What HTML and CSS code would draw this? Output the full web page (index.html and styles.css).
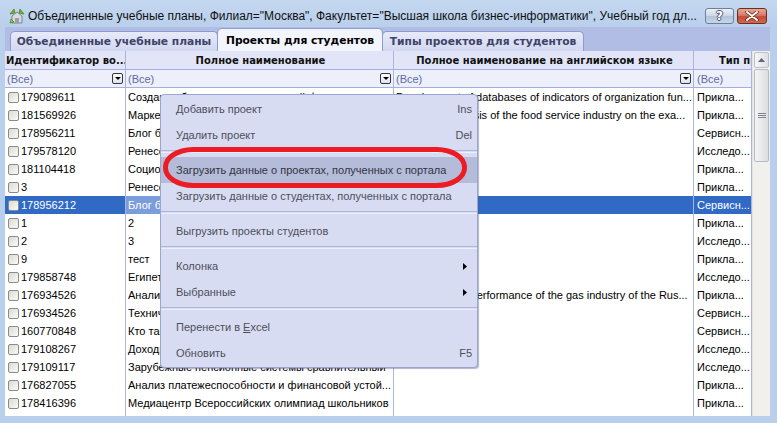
FILE: index.html
```html
<!DOCTYPE html>
<html lang="ru">
<head>
<meta charset="utf-8">
<title>Проекты для студентов</title>
<link rel="stylesheet" href="styles.css">
</head>
<body>
<div class="win">
  <div class="titlebar">
    <svg class="appicon" viewBox="0 0 16 16" width="16" height="16">
      <path d="M3 8 L8 4 L13 8 L13 15 L3 15 Z" fill="#d9dbe0" stroke="#7d838f" stroke-width="1"/>
      <rect x="6" y="10" width="4" height="5" fill="#9aa0ab"/>
      <path d="M1 6 L5 1 L6 5 Z" fill="#6dbb2a" stroke="#3f7f14" stroke-width="0.7"/>
      <path d="M15 6 L11 1 L10 5 Z" fill="#6dbb2a" stroke="#3f7f14" stroke-width="0.7"/>
      <path d="M2 11 L5 14 L1 15 Z" fill="#8fd04a" stroke="#3f7f14" stroke-width="0.7"/>
    </svg>
    <span class="title">Объединенные учебные планы, Филиал="Москва", Факультет="Высшая школа бизнес-информатики", Учебный год дл...</span>
    <div class="tbtns">
      <span class="tbtn help">?</span>
      <span class="tbtn close">
        <svg viewBox="0 0 14 10" width="14" height="10"><path d="M2 1 L12 9 M12 1 L2 9" stroke="#5a2018" stroke-width="3.4" stroke-linecap="round"/><path d="M2 1 L12 9 M12 1 L2 9" stroke="#ffffff" stroke-width="2" stroke-linecap="round"/></svg>
      </span>
    </div>
  </div>

  <div class="client">
    <div class="tabs">
      <div class="tab t1">Объединенные учебные планы</div>
      <div class="tab t2 active">Проекты для студентов</div>
      <div class="tab t3">Типы проектов для студентов</div>
    </div>

    <div class="gridwrap">
      <div class="grid">
        <div class="row head">
          <div class="c c1">Идентификатор во...</div>
          <div class="c c2 center">Полное наименование</div>
          <div class="c c3 center">Полное наименование на английском языке</div>
          <div class="c c4 tip">Тип проекта</div>
        </div>
        <div class="row filter">
          <div class="c c1"><span class="ftxt">(Все)</span><span class="dd"></span></div>
          <div class="c c2"><span class="ftxt">(Все)</span><span class="dd"></span></div>
          <div class="c c3"><span class="ftxt">(Все)</span><span class="dd"></span></div>
          <div class="c c4"><span class="ftxt">(Все)</span></div>
        </div>

        <div class="row"><div class="c c1"><span class="cb"></span>179089611</div><div class="c c2">Создание баз данных показателей функционирования организации</div><div class="c c3">Development of databases of indicators of organization fun...</div><div class="c c4">Прикла...</div></div>
        <div class="row"><div class="c c1"><span class="cb"></span>181569926</div><div class="c c2">Маркетинговое исследование предприятий общественного питания</div><div class="c c3">Marketing analysis of the food service industry on the exa...</div><div class="c c4">Прикла...</div></div>
        <div class="row"><div class="c c1"><span class="cb"></span>178956211</div><div class="c c2">Блог бизнес-информатики</div><div class="c c3"></div><div class="c c4">Сервисн...</div></div>
        <div class="row"><div class="c c1"><span class="cb"></span>179578120</div><div class="c c2">Ренессанс в искусстве</div><div class="c c3"></div><div class="c c4">Исследо...</div></div>
        <div class="row"><div class="c c1"><span class="cb"></span>181104418</div><div class="c c2">Социология управления</div><div class="c c3"></div><div class="c c4">Прикла...</div></div>
        <div class="row"><div class="c c1"><span class="cb"></span>3</div><div class="c c2">Ренессанс</div><div class="c c3"></div><div class="c c4">Прикла...</div></div>
        <div class="row sel"><div class="c c1"><span class="cb"></span>178956212</div><div class="c c2 focus">Блог бизнес-информатики</div><div class="c c3"></div><div class="c c4">Сервисн...</div></div>
        <div class="row"><div class="c c1"><span class="cb"></span>1</div><div class="c c2">2</div><div class="c c3"></div><div class="c c4">Прикла...</div></div>
        <div class="row"><div class="c c1"><span class="cb"></span>2</div><div class="c c2">3</div><div class="c c3"></div><div class="c c4">Исследо...</div></div>
        <div class="row"><div class="c c1"><span class="cb"></span>9</div><div class="c c2">тест</div><div class="c c3"></div><div class="c c4">Прикла...</div></div>
        <div class="row"><div class="c c1"><span class="cb"></span>179858748</div><div class="c c2">Египет</div><div class="c c3"></div><div class="c c4">Исследо...</div></div>
        <div class="row"><div class="c c1"><span class="cb"></span>176934526</div><div class="c c2">Анализ эффективности газовой отрасли</div><div class="c c3">Analysis of the performance of the gas industry of the Rus...</div><div class="c c4">Прикла...</div></div>
        <div class="row"><div class="c c1"><span class="cb"></span>176934526</div><div class="c c2">Технический анализ</div><div class="c c3"></div><div class="c c4">Сервисн...</div></div>
        <div class="row"><div class="c c1"><span class="cb"></span>160770848</div><div class="c c2">Кто такие хакеры</div><div class="c c3"></div><div class="c c4">Сервисн...</div></div>
        <div class="row"><div class="c c1"><span class="cb"></span>179108267</div><div class="c c2">Доходность инвестиций</div><div class="c c3"></div><div class="c c4">Исследо...</div></div>
        <div class="row"><div class="c c1"><span class="cb"></span>179109117</div><div class="c c2">Зарубежные пенсионные системы сравнительный</div><div class="c c3"></div><div class="c c4">Исследо...</div></div>
        <div class="row"><div class="c c1"><span class="cb"></span>176827055</div><div class="c c2">Анализ платежеспособности и финансовой устой...</div><div class="c c3"></div><div class="c c4">Прикла...</div></div>
        <div class="row"><div class="c c1"><span class="cb"></span>178416396</div><div class="c c2">Медиацентр Всероссийских олимпиад школьников</div><div class="c c3"></div><div class="c c4">Прикла...</div></div>
        <div class="row"><div class="c c1"><span class="cb"></span>178416397</div><div class="c c2">Олимпиада</div><div class="c c3"></div><div class="c c4">Прикла...</div></div>
      </div>

      <div class="vscroll">
        <div class="sb-btn">
          <svg viewBox="0 0 7 4" width="7" height="4"><path d="M0 4 L3.5 0 L7 4 Z" fill="#5c6678"/></svg>
        </div>
        <div class="sb-thumb">
          <span class="grip"></span><span class="grip"></span><span class="grip"></span>
        </div>
      </div>
    </div>
  </div>

  <div class="menu">
    <div class="mi"><span>Добавить проект</span><span class="sc">Ins</span></div>
    <div class="mi"><span>Удалить проект</span><span class="sc">Del</span></div>
    <div class="msep"></div>
    <div class="mi hot"><span>Загрузить данные о проектах, полученных с портала</span></div>
    <div class="mi"><span>Загрузить данные о студентах, полученных с портала</span></div>
    <div class="msep"></div>
    <div class="mi"><span>Выгрузить проекты студентов</span></div>
    <div class="msep"></div>
    <div class="mi sub"><span>Колонка</span><svg class="arr" viewBox="0 0 4 7" width="4" height="7"><path d="M0 0 L4 3.5 L0 7 Z" fill="#000"/></svg></div>
    <div class="mi sub"><span>Выбранные</span><svg class="arr" viewBox="0 0 4 7" width="4" height="7"><path d="M0 0 L4 3.5 L0 7 Z" fill="#000"/></svg></div>
    <div class="msep"></div>
    <div class="mi"><span>Перенести в <u>E</u>xcel</span></div>
    <div class="mi"><span>Обновить</span><span class="sc">F5</span></div>
    <div class="redmark"></div>
  </div>
</div>
</body>
</html>
```

FILE: styles.css
```css
html, body {
  margin: 0;
  padding: 0;
}
body {
  width: 777px;
  height: 423px;
  overflow: hidden;
  background: #b9cfeb;
  font-family: "Liberation Sans", Arial, sans-serif;
  font-size: 11px;
  color: #000;
}
.win {
  position: relative;
  width: 777px;
  height: 423px;
  display: flex;
  flex-direction: column;
  background: #b9cfeb;
}

/* title bar */
.titlebar {
  height: 27px;
  box-sizing: border-box;
  padding: 8px 0 0 9px;
  display: flex;
  align-items: flex-start;
  background: linear-gradient(#c4d7f0, #b9cfeb);
}
.appicon {
  flex: none;
  margin-right: 3px;
}
.title {
  flex: 1;
  font-size: 12px;
  line-height: 16px;
  color: #101010;
  white-space: nowrap;
  overflow: hidden;
}
.tbtns {
  display: flex;
  gap: 3px;
  margin-right: 10px;
  margin-left: 4px;
}
.tbtn {
  height: 16px;
  box-sizing: border-box;
  border-radius: 3px;
  display: flex;
  align-items: center;
  justify-content: center;
}
.help {
  width: 29px;
  border: 1px solid #6f7f99;
  background: linear-gradient(#eaf0f7 0%, #cdd8e7 48%, #b3c3da 52%, #c9d6e8 100%);
  font-family: "DejaVu Sans", sans-serif;
  font-weight: bold;
  font-size: 12px;
  color: #fff;
  text-shadow: 1px 0 0 #4b5870, -1px 0 0 #4b5870, 0 1px 0 #4b5870, 0 -1px 0 #4b5870;
}
.close {
  width: 30px;
  border: 1px solid #6e2d23;
  background: linear-gradient(#e9a797 0%, #d77a66 45%, #c44a33 55%, #d06a50 100%);
}

/* client */
.client {
  flex: 1;
  margin: 0 7px 7px 5px;
  display: flex;
  flex-direction: column;
  background: #b2bde6;
  min-height: 0;
}
.tabs {
  height: 24px;
  flex: none;
  display: flex;
  align-items: flex-end;
  padding-left: 5px;
}
.tab {
  height: 20px;
  box-sizing: border-box;
  border: 1px solid #8e9bd0;
  border-bottom: none;
  border-radius: 5px 5px 0 0;
  background: linear-gradient(#e7eaf8, #d2d8f1);
  font-family: "DejaVu Sans", sans-serif;
  font-weight: bold;
  font-size: 10.7px;
  color: #3d4468;
  display: flex;
  align-items: center;
  justify-content: center;
  white-space: nowrap;
}
.tab.active {
  height: 23px;
  background: #f3f5fc;
  color: #000;
}
.t1 { width: 208px; }
.t2 { width: 166px; margin-left: -1px; }
.t3 { width: 202px; margin-left: -1px; }

/* grid */
.gridwrap {
  flex: 1;
  min-height: 0;
  display: flex;
  background: #fff;
  overflow: hidden;
}
.grid {
  width: 747px;
  flex: none;
}
.row {
  display: grid;
  grid-template-columns: 121px 268px 300px 58px;
  height: 18px;
}
.c {
  box-sizing: border-box;
  border-right: 1px solid #a9b5e0;
  white-space: nowrap;
  overflow: hidden;
  display: flex;
  align-items: center;
  padding-left: 2px;
}
.c4 { padding-left: 3px; }
.head {
  height: 19px;
}
.head .c {
  background: #e2e5f7;
  border-bottom: 1px solid #a3afdc;
  font-family: "DejaVu Sans", sans-serif;
  font-weight: bold;
  font-size: 10px;
  color: #111;
}
.head .c1 { padding-left: 1px; }
.head .center { justify-content: center; }
.head .tip { padding-left: 25px; }
.filter .c {
  background: #edeffa;
  border-bottom: 1px solid #a3afdc;
  justify-content: space-between;
  padding-right: 2px;
}
.ftxt {
  color: #5d6ba3;
}
.dd {
  width: 11px;
  height: 11px;
  box-sizing: border-box;
  border: 1px solid #303540;
  border-radius: 2px;
  background: linear-gradient(#ffffff, #dfe3ee);
  position: relative;
}
.dd::after {
  content: "";
  position: absolute;
  left: 2px;
  top: 3px;
  border-left: 3px solid transparent;
  border-right: 3px solid transparent;
  border-top: 3px solid #000;
}
.cb {
  width: 11px;
  height: 11px;
  box-sizing: border-box;
  border: 1px solid #858b8f;
  border-radius: 2px;
  background: linear-gradient(135deg, #dcdcd3, #fafaf7);
  margin: 0 2px 0 1px;
  flex: none;
}
.sel .c {
  background: #316ac5;
  color: #fff;
}
.sel .c.focus {
  background: #7b9ddc;
}

/* scrollbar */
.vscroll {
  width: 18px;
  flex: none;
  box-sizing: border-box;
  background: #f1f0ec;
  border-left: 1px solid #e4e4e4;
  padding: 1px 1px 0 1px;
  display: flex;
  flex-direction: column;
  gap: 1px;
}
.sb-btn {
  height: 16px;
  box-sizing: border-box;
  border: 1px solid #b8c0cf;
  border-radius: 2px;
  background: linear-gradient(90deg, #f7f7f7, #dedfe2);
  display: flex;
  align-items: center;
  justify-content: center;
}
.sb-thumb {
  height: 93px;
  box-sizing: border-box;
  border: 1px solid #b3b9c6;
  border-radius: 2px;
  background: linear-gradient(90deg, #f5f5f5, #dcdde0);
  display: flex;
  flex-direction: column;
  align-items: center;
  justify-content: center;
  gap: 1px;
}
.grip {
  width: 8px;
  height: 1px;
  background: #7d8595;
}

/* context menu */
.menu {
  position: absolute;
  left: 160px;
  top: 94px;
  width: 318px;
  height: 274px;
  box-sizing: border-box;
  padding-top: 1px;
  background: #d7dcf3;
  border: 1px solid #9ba6cc;
  border-radius: 4px;
  box-shadow: 1px 1px 1px rgba(80, 90, 130, 0.45);
  color: #4d4f58;
}
.mi {
  height: 26px;
  display: flex;
  align-items: center;
  justify-content: space-between;
  padding: 0 5px 0 15px;
  white-space: nowrap;
}
.mi.hot {
  background: #b4bcda;
  color: #33353d;
}
.mi.sub {
  padding-right: 10px;
}
.arr {
  flex: none;
}
.msep {
  height: 5px;
  margin-bottom: 4px;
  box-sizing: border-box;
  border-bottom: 1px solid #ecefff;
  position: relative;
}
.msep::before {
  content: "";
  position: absolute;
  left: 0;
  right: 0;
  bottom: 1px;
  height: 1px;
  background: #adb6da;
}
.redmark {
  position: absolute;
  left: 2px;
  top: 52px;
  width: 304px;
  height: 41px;
  box-sizing: border-box;
  border: 5px solid #ec1c24;
  border-radius: 30px / 20px;
}
```
